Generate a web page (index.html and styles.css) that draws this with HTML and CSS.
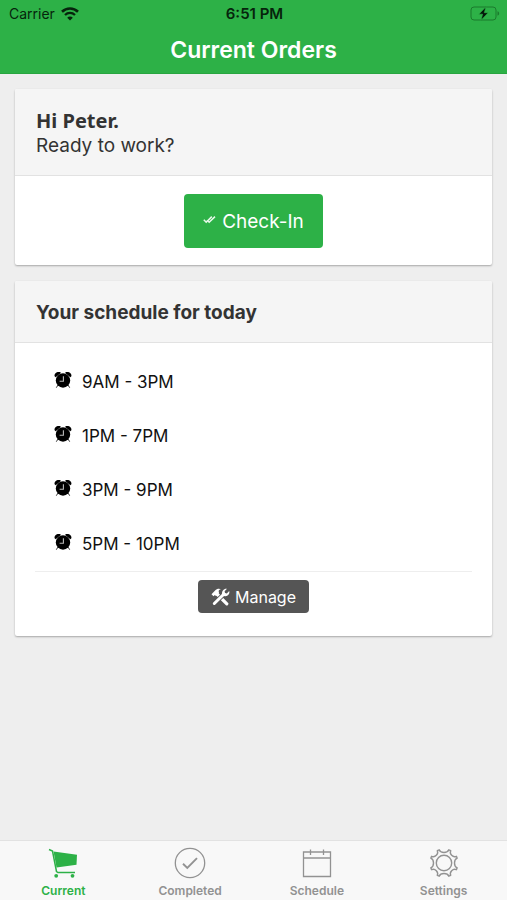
FILE: index.html
```html
<!DOCTYPE html>
<html lang="en">
<head>
<meta charset="utf-8">
<meta name="viewport" content="width=device-width, initial-scale=1">
<title>Current Orders</title>
<link rel="stylesheet" href="styles.css">
</head>
<body>
<svg class="defs" aria-hidden="true">
  <symbol id="alarm" viewBox="0 0 18 18">
    <path d="M.6 5.2C.1 2.500 2.700.3 6.200 1.100L6.800 2.100 1.700 6.200ZM17.400 5.200C17.900 2.500 15.300.3 11.800 1.100L11.200 2.100 16.300 6.200Z"/>
    <path d="M4 14 2.300 16.700M14 14l1.700 2.700" stroke="#000" stroke-width=".8"/>
    <circle cx="9" cy="9.500" r="7.200"/>
    <path d="M9.400 5.200V10.200H5.600" fill="none" stroke="#bbb" stroke-width="1.100"/>
  </symbol>
</svg>
<header class="topbar">
  <div class="status">
    <div class="carrier">
      <span>Carrier</span>
      <svg width="18" height="14" viewBox="0 0 18 14" fill="none" stroke="#06240c" aria-hidden="true">
        <path d="M1 4.800C5.500.4 12.500.4 17 4.800" stroke-width="2.600"/>
        <path d="M4 8c2.900-2.800 7.100-2.800 10 0" stroke-width="2.300"/>
        <path d="M9 13.500 6.200 10.700c1.600-1.500 4-1.500 5.600 0Z" fill="#06240c" stroke="none"/>
      </svg>
    </div>
    <time>6:51 PM</time>
    <svg class="battery" width="30" height="15" viewBox="0 0 30 15" aria-hidden="true">
      <rect x="1" y="1" width="25" height="13" rx="3" fill="none" stroke="#1b7a2d"/>
      <path d="M27.500 5.300c2.200.7 2.200 3.700 0 4.400Z" fill="#1b7a2d"/>
      <path d="M16 .8 8.800 8.200H12.600L11 14.200 18.200 6.700H14.300Z" fill="#04180a" stroke="#2db147" stroke-width=".6"/>
    </svg>
  </div>
  <h1>Current Orders</h1>
</header>
<main>
  <section class="card">
    <div class="card-head">
      <h2 class="greeting">Hi Peter.</h2>
      <p>Ready to work?</p>
    </div>
    <div class="card-body checkin">
      <button class="btn btn-primary" type="button">
        <svg width="13" height="12" viewBox="0 0 13 12" fill="none" stroke="#e6f8e9" stroke-width="1.500" aria-hidden="true">
          <path d="M.8 4.800 3.200 7.200 8.800 1.600M4.600 5.400 6.200 7.200 12 1.600M3.200 7.200 4.600 5.600"/>
        </svg>
        Check-In
      </button>
    </div>
  </section>
  <section class="card">
    <div class="card-head">
      <h2>Your schedule for today</h2>
    </div>
    <div class="card-body">
      <ul class="shifts">
        <li><svg width="18" height="22" aria-hidden="true"><use href="#alarm" width="18" height="18"/></svg>9AM - 3PM</li>
        <li><svg width="18" height="22" aria-hidden="true"><use href="#alarm" width="18" height="18"/></svg>1PM - 7PM</li>
        <li><svg width="18" height="22" aria-hidden="true"><use href="#alarm" width="18" height="18"/></svg>3PM - 9PM</li>
        <li><svg width="18" height="22" aria-hidden="true"><use href="#alarm" width="18" height="18"/></svg>5PM - 10PM</li>
      </ul>
      <div class="manage">
        <button class="btn btn-dark" type="button">
          <svg width="19" height="18" viewBox="0 0 19 18" aria-hidden="true">
            <path d="M5.500 5.500 15.800 15.800" stroke="#fff" stroke-width="3.200" stroke-linecap="round"/>
            <path d="M.5 6.200 4.600 2.100C6.300.5 8.600.4 10 1.300 8.400 1.500 7.700 2.200 7.700 3.400L8 5 5 8 3.900 6.900 2.500 8.300Z" fill="#fff"/>
            <path d="M2.600 16 13.200 5.800" stroke="#555" stroke-width="4.600"/>
            <path d="M3.300 15.500 13 6" stroke="#fff" stroke-width="3" stroke-linecap="round"/>
            <path d="M16 .8 13.600 3.200 14 5 15.800 5.400 18.200 3C19 5.300 17.200 8.100 14.500 8.200L12.300 8 11 6.700C10.600 3.200 12.700.4 16 .8Z" fill="#fff"/>
          </svg>
          Manage
        </button>
      </div>
    </div>
  </section>
</main>
<nav class="tabs">
  <a class="active" href="#current" aria-current="page">
    <svg width="32" height="32" viewBox="0 0 32 32" aria-hidden="true">
      <path d="M6.500 4.500 30 7.800 29.500 17.800 9.500 20.500Z" fill="#2db147"/>
      <path d="M2 2.500 5.500 4 9.500 24.500 11 25.500H28" fill="none" stroke="#2db147" stroke-width="1.500"/>
      <circle cx="9.200" cy="28.800" r="1.900" fill="#2db147"/><circle cx="25.500" cy="28.800" r="1.900" fill="#2db147"/>
    </svg>
    Current
  </a>
  <a href="#completed">
    <svg width="32" height="32" viewBox="0 0 32 32" fill="none" stroke="#929292" aria-hidden="true">
      <circle cx="16" cy="16" r="14.700" stroke-width="1.300"/>
      <path d="M9 16.800 13.300 21 23 11.200" stroke-width="1.900"/>
    </svg>
    Completed
  </a>
  <a href="#schedule">
    <svg width="32" height="32" viewBox="0 0 32 32" fill="none" stroke="#929292" stroke-width="1.300" aria-hidden="true">
      <path d="M2.500 5H29.500V29.500H2.500ZM2.500 11H29.500M9.500 2.500V8M22.500 2.500V8"/>
    </svg>
    Schedule
  </a>
  <a href="#settings">
    <svg width="32" height="32" viewBox="0 0 32 32" fill="none" stroke="#929292" stroke-width="1.400" stroke-linejoin="round" aria-hidden="true">
      <circle cx="16" cy="16" r="7.700"/>
      <path d="M11.200 2.800C12.500 6.400 19.500 6.400 20.800 2.800L22.700 3.600C21.100 7.100 25 10.900 28.400 9.300L29.200 11.200C25.600 12.500 25.600 19.500 29.200 20.800L28.400 22.700C25 21.100 21.100 25 22.700 28.400L20.800 29.200C19.500 25.600 12.500 25.600 11.200 29.200L9.300 28.400C10.900 25 7 21.100 3.600 22.700L2.800 20.800C6.400 19.500 6.400 12.500 2.800 11.200L3.600 9.300C7 10.900 10.900 7.100 9.300 3.600Z"/>
    </svg>
    Settings
  </a>
</nav>
</body>
</html>
```
FILE: styles.css
```css
* { box-sizing: border-box; }

body {
  margin: 0;
  min-height: 100vh;
  display: flex;
  flex-direction: column;
  background: #eee;
  color: #333;
  font-family: Inter, "Liberation Sans", sans-serif;
}

h1, h2, p, ul { margin: 0; padding: 0; }
svg { display: block; flex: none; }
.defs { position: absolute; width: 0; height: 0; }

.topbar {
  background: #2db147;
  border-bottom: 1px solid #28a540;
}

.status {
  display: grid;
  grid-template-columns: 1fr auto 1fr;
  align-items: center;
  height: 27px;
  padding: 0 7px 0 9px;
  color: #06240c;
  font-size: 14px;
}

.carrier { display: flex; align-items: center; gap: 6px; }
.status time { font-size: 15px; font-weight: 600; }
.battery { justify-self: end; }

h1 {
  color: #fff;
  font-size: 23px;
  font-weight: 600;
  line-height: 46px;
  text-align: center;
}

main {
  flex: 1;
  display: flex;
  flex-direction: column;
  gap: 16px;
  padding: 15px 15px 24px;
}

.card {
  background: #fff;
  border-radius: 2px;
  box-shadow: 0 1px 2px rgba(0, 0, 0, .3);
}

.card-head {
  padding: 19px 21px 17px;
  background: #f5f5f5;
  border-bottom: 1px solid #e2e2e2;
  border-radius: 2px 2px 0 0;
  font-size: 19px;
  line-height: 25px;
}

.card-head h2 { font-size: 19px; font-weight: 700; }
.card-head .greeting { font-family: "Noto Sans", "Open Sans", sans-serif; font-size: 20px; }

.checkin { display: flex; justify-content: center; padding: 18px 20px 17px; }

.btn {
  display: flex;
  align-items: center;
  border: 0;
  border-radius: 4px;
  color: #fff;
  font-family: inherit;
}

.btn-primary {
  gap: 6px;
  height: 54px;
  padding: 0 19px;
  background: #2db147;
  font-size: 19px;
}

.btn-dark {
  gap: 5px;
  height: 33px;
  padding: 0 13px;
  background: #555;
  font-size: 16px;
}

.card-body .shifts {
  list-style: none;
  margin: 0 20px;
  padding: 12px 0 0 19px;
  border-bottom: 1px solid #eee;
}

.shifts li {
  display: flex;
  align-items: center;
  gap: 10px;
  height: 54px;
  color: #111;
  font-size: 17px;
}

.manage { display: flex; justify-content: center; padding: 8px 20px 23px; }

.tabs {
  display: grid;
  grid-template-columns: repeat(4, 1fr);
  background: #f8f8f8;
  border-top: 1px solid #e2e2e2;
}

.tabs a {
  display: flex;
  flex-direction: column;
  align-items: center;
  gap: 4px;
  padding: 6px 0 1px;
  color: #929292;
  font-size: 12px;
  font-weight: 600;
  line-height: 16px;
  text-decoration: none;
}

.tabs .active { color: #2db147; }
```
